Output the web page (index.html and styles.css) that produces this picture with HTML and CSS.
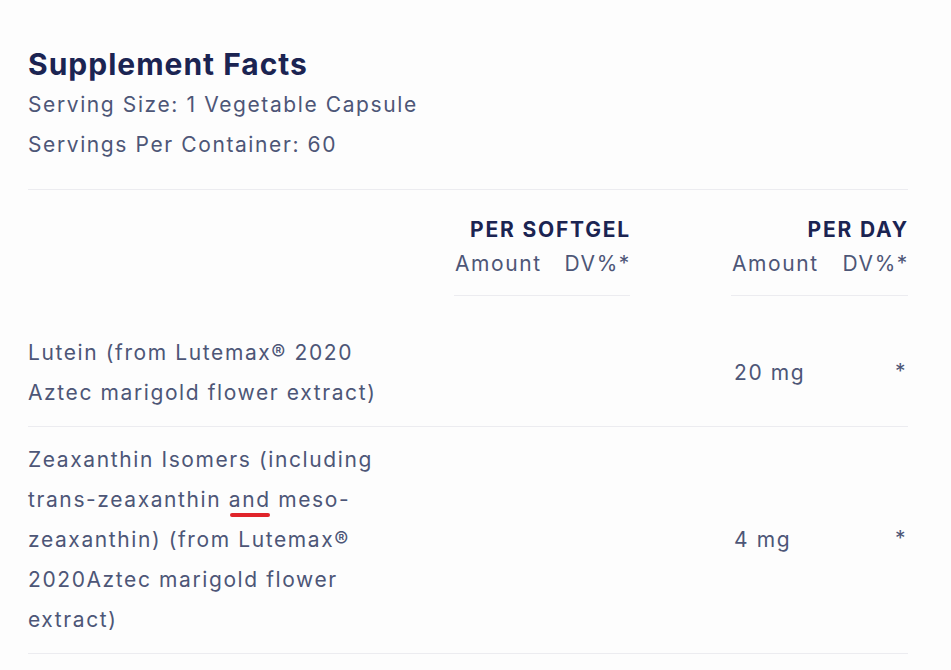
FILE: index.html
```html
<!DOCTYPE html>
<html lang="en">
<head>
<meta charset="utf-8">
<title>Supplement Facts</title>
<link rel="stylesheet" href="styles.css">
</head>
<body>
<section class="facts">
  <h2 class="facts-title">Supplement Facts</h2>
  <p class="facts-meta">Serving Size: 1 Vegetable Capsule</p>
  <p class="facts-meta">Servings Per Container: 60</p>

  <div class="facts-table">
    <div class="head-row">
      <div class="label-cell"></div>
      <div class="group">
        <div class="group-title">PER SOFTGEL</div>
        <div class="group-sub"><span>Amount</span><span>DV%*</span></div>
      </div>
      <div class="spacer"></div>
      <div class="group">
        <div class="group-title">PER DAY</div>
        <div class="group-sub"><span>Amount</span><span>DV%*</span></div>
      </div>
    </div>

    <div class="row first">
      <div class="label-cell">Lutein (from Lutemax® 2020 Aztec marigold flower extract)</div>
      <div class="vals"><span></span><span></span></div>
      <div class="spacer"></div>
      <div class="vals"><span>20 mg</span><span class="star">*</span></div>
    </div>

    <div class="row">
      <div class="label-cell">Zeaxanthin Isomers (including trans-zeaxanthin <span class="spell">and</span> meso-zeaxanthin) (from Lutemax® 2020Aztec marigold flower extract)</div>
      <div class="vals"><span></span><span></span></div>
      <div class="spacer"></div>
      <div class="vals"><span>4 mg</span><span class="star">*</span></div>
    </div>
  </div>
</section>
</body>
</html>
```

FILE: styles.css
```css
html, body {
  margin: 0;
  padding: 0;
  background: #fdfdfd;
}

body {
  font-family: Inter, "Noto Sans", "Liberation Sans", sans-serif;
  color: #4d5677;
}

.facts {
  padding: 44px 43px 0 28px;
}

.facts-title {
  margin: 0 0 1px;
  font-size: 30px;
  line-height: 40px;
  font-weight: 700;
  color: #1b2452;
  letter-spacing: 1px;
}

.facts-meta {
  margin: 0;
  font-size: 21px;
  line-height: 40px;
  letter-spacing: 1.6px;
}

.facts-table {
  margin-top: 24px;
  border-top: 1px solid #ececf0;
}

.head-row,
.row {
  display: grid;
  grid-template-columns: 426px 176px 101px 177px;
}

.head-row {
  padding-top: 23px;
  margin-bottom: 24px;
}

.group {
  border-bottom: 1px solid #ececf0;
  padding-bottom: 14px;
}

.group-title {
  text-align: right;
  font-size: 21px;
  font-weight: 700;
  line-height: 34px;
  color: #1b2452;
  letter-spacing: 1.8px;
  margin-right: -1px;
}

.group-sub {
  display: flex;
  justify-content: space-between;
  font-size: 21px;
  line-height: 34px;
  letter-spacing: 1.6px;
  padding-left: 1px;
  margin-right: -1px;
}

.row {
  border-bottom: 1px solid #ececf0;
  padding: 13px 0 13px;
  font-size: 21px;
  line-height: 40px;
  letter-spacing: 1.6px;
}

.row .label-cell {
  max-width: 360px;
}

.vals {
  display: flex;
  justify-content: space-between;
  align-items: center;
  padding-left: 3px;
  margin-right: 1px;
}

.star {
  margin-top: -2px;
}

.spell {
  position: relative;
}

.spell::after {
  content: "";
  position: absolute;
  left: 1px;
  right: 1px;
  bottom: -5px;
  height: 4px;
  border-radius: 2px;
  background: #e0242a;
}
```
